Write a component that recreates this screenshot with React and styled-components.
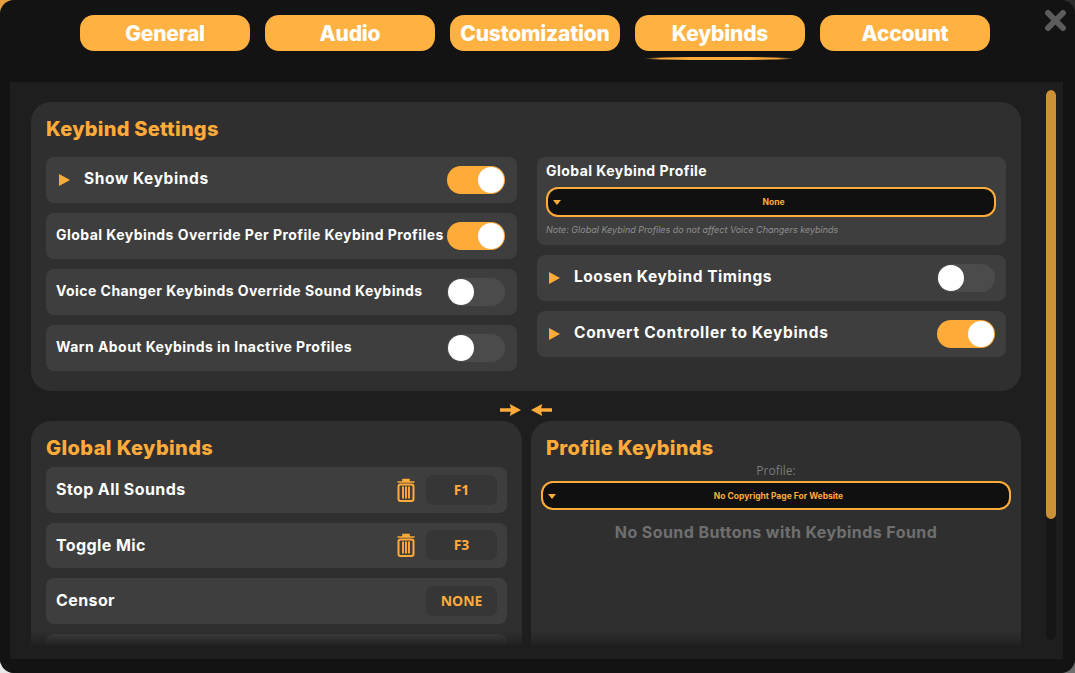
import React from "react";
import styled, { createGlobalStyle } from "styled-components";

const Global = createGlobalStyle`
  html, body { margin: 0; padding: 0; }
  html { background: #0c0c0c; }
  body {
    width: 1075px; height: 673px; overflow: hidden; font-family: "Inter", "Liberation Sans", sans-serif;
    background:
      radial-gradient(circle at 0 0, #e6a040 0 10px, transparent 16px),
      radial-gradient(circle at 100% 0, #2c2c2c 0 10px, transparent 16px),
      radial-gradient(circle at 0 100%, #e8e8e8 0 9px, transparent 14px),
      radial-gradient(circle at 100% 100%, #6e6e6e 0 10px, transparent 16px),
      #0c0c0c;
  }
  * { box-sizing: border-box; }
`;
const orange = "#ffab3a";

const Window = styled.div`
  width: 1075px; height: 673px; background: #131313; border-radius: 14px;
  position: relative; overflow: hidden; display: flex; flex-direction: column;
`;
const TabBar = styled.div`
  height: 82px; padding: 15px 0 0 80px; display: flex; gap: 15px; align-items: flex-start;
`;
const Tab = styled.div`
  width: 170px; height: 36px; border-radius: 14px; background: #ffb142; color: #fff;
  font-weight: 800; font-size: 21px; line-height: 37px; text-align: center; position: relative; letter-spacing: -.2px;
  ${p => p.$active && `
    &::after { content: ""; position: absolute; left: 8px; right: 10px; top: 42px; height: 3px;
      border-radius: 50%; background: linear-gradient(90deg, transparent, ${orange} 12%, ${orange} 88%, transparent); }
  `}
`;
const Close = styled.svg`
  position: absolute; left: 1044px; top: 9px; width: 23px; height: 23px;
`;
const Content = styled.div`
  margin: 0 12px 0 10px; height: 577px; background: #1e1e1e; position: relative;
  padding: 20px 42px 0 21px;
`;
const Scroll = styled.div`
  height: 543px; overflow: hidden; display: flex; flex-direction: column;
`;
const Card = styled.div`
  background: #2f2f2f; border-radius: 20px; padding: 15px;
`;
const SettingsCard = styled(Card)`height: 289px; flex: none;`;
const Title = styled.h2`
  margin: 0; color: ${orange}; font-size: 20px; font-weight: 800; line-height: 25px; letter-spacing: ${p => p.$ls || .3}px;
`;
const SettingsGrid = styled.div`
  display: grid; grid-template-columns: 471px 469px; gap: 20px; margin-top: 15px;
`;
const Column = styled.div`display: flex; flex-direction: column; gap: 10px;`;
const Row = styled.div`
  height: 46px; background: #3e3e3e; border-radius: 8px; display: flex; align-items: center;
  padding: 0 12px 0 10px; color: #fff; font-weight: 700; font-size: ${p => p.$fs || 15}px;
  letter-spacing: ${p => p.$ls || .45}px;
`;
const RightRow = styled(Row)`padding: 0 11px 0 9px;`;
const Tri = styled.span`
  width: 0; height: 0; border-left: 11px solid ${orange}; border-top: 6px solid transparent; border-bottom: 6px solid transparent;
  margin: 0 14px 0 3px; flex: none;
`;
const Label = styled.span`flex: 1; white-space: nowrap; padding-bottom: 3px;`;
const Toggle = styled.div`
  width: 58px; height: 28px; border-radius: 14px; flex: none; position: relative;
  background: ${p => p.$on ? "#ffab3a" : "#4b4b4b"};
  &::after { content: ""; position: absolute; top: 1px; ${p => p.$on ? "right: 1px" : "left: 1px"};
    width: 26px; height: 26px; border-radius: 50%; background: #fff; }
`;
const ProfileBox = styled.div`
  height: 88px; background: #3e3e3e; border-radius: 8px; padding: 5px 10px 0 9px; display: flex; flex-direction: column;
`;
const BoxLabel = styled.div`color: #fff; font-weight: 700; font-size: 14px; line-height: 18px; letter-spacing: .45px;`;
const Select = styled.div`
  height: 30px; margin-top: 7px; padding-left: 5px; background: #101010; border: 2px solid #ffab3a; border-radius: 12px; position: relative;
  display: flex; align-items: center; justify-content: center; color: ${orange}; font-weight: 700; font-size: 8.5px;
  &::before { content: ""; position: absolute; left: 5px; top: 50%; margin-top: -2px; border-top: 5px solid ${orange};
    border-left: 4px solid transparent; border-right: 4px solid transparent; }
`;
const WideSelect = styled(Select)`height: 29px; margin: 2px -5px 0;`;
const Note = styled.div`color: #8e8e8e; font-size: 9px; font-style: italic; margin-top: 7px; line-height: 12px;`;
const ArrowRow = styled.div`
  height: 30px; padding: 8px 1px 0 0; display: flex; justify-content: center; align-items: center; gap: 10px;
`;
const Bottom = styled.div`display: grid; grid-template-columns: 491px 490px; gap: 9px; flex: 1; min-height: 0;`;
const BottomCard = styled(Card)`
  border-radius: 20px 20px 0 0; padding-bottom: 0; display: flex; flex-direction: column; overflow: hidden; height: 100%;
`;
const KeyList = styled.div`display: flex; flex-direction: column; gap: 10px; margin-top: 6px;`;
const KeyRow = styled(Row)`
  height: 45.5px; padding: 0 10px; font-size: 16px; flex: none; letter-spacing: .4px;
  ${Label} { padding-bottom: 1px; }
`;
const Key = styled.div`
  width: 71px; height: 30px; border-radius: 7px; background: #363636; color: ${orange}; flex: none;
  font: 700 14px/30px "Open Sans", sans-serif; text-align: center; margin-left: 11px; letter-spacing: 0;
`;
const ProfileLabel = styled.div`color: #7a7a7a; text-align: center; font: 400 12px/16px "Open Sans", sans-serif; margin-top: 2px;`;
const Empty = styled.div`color: #6f6f6f; text-align: center; font-weight: 700; font-size: 16px; margin-top: 12px; letter-spacing: .42px;`;
const Fade = styled.div`
  position: absolute; left: 21px; right: 42px; top: 549px; height: 14px; pointer-events: none;
  background: linear-gradient(rgba(30,30,30,0), rgba(30,30,30,.85));
`;
const Track = styled.div`
  position: absolute; left: 1036px; top: 8px; width: 10px; height: 550px; background: #161616; border-radius: 5px; overflow: hidden;
`;
const Thumb = styled.div`height: 429px; background: #cc9136; border-radius: 5px;`;
const FlipWrap = styled.span`display: flex; ${p => p.$flip && "transform: scaleX(-1);"}`;

const Trash = () => (
  <svg width="18" height="24" viewBox="0 0 18 24" fill="none" stroke={orange} strokeWidth="2">
    <path d="M6 1.5h6v1.5H6zM0.5 4h17" strokeWidth="1.6" />
    <rect x="1.5" y="6.5" width="15" height="16.5" rx="2" />
    <path d="M6 8.5v12M9 8.5v12M12 8.5v12" strokeWidth="1.9" />
  </svg>
);
const Arrow = ({ flip }) => (
  <FlipWrap $flip={flip}>
    <svg width="21" height="14" viewBox="0 0 21 14">
      <path d="M0 5.2h10.800L9.800 1 21 7 9.800 13l1-4.200H0z" fill={orange} />
    </svg>
  </FlipWrap>
);

const SoloRow = ({ label, on, arrow, fs, ls, as: C = Row }) => (
  <C $fs={fs} $ls={ls}>
    {arrow && <Tri />}
    <Label>{label}</Label>
    <Toggle $on={on} />
  </C>
);

export default function App() {
  return (
    <Window>
      <Global />
      <TabBar>
        {["General", "Audio", "Customization", "Keybinds", "Account"].map(t => (
          <Tab key={t} $active={t === "Keybinds"}>{t}</Tab>
        ))}
      </TabBar>
      <Close viewBox="0 0 23 23"><path d="M4 4l15 15M19 4L4 19" stroke="#5c5c5c" strokeWidth="6" strokeLinecap="round" /></Close>
      <Content>
        <Scroll>
          <SettingsCard>
            <Title $ls={.25}>Keybind Settings</Title>
            <SettingsGrid>
              <Column>
                <SoloRow arrow fs={15.5} ls={.6} label="Show Keybinds" on />
                <SoloRow label="Global Keybinds Override Per Profile Keybind Profiles" on fs={14} />
                <SoloRow label="Voice Changer Keybinds Override Sound Keybinds" fs={14} />
                <SoloRow label="Warn About Keybinds in Inactive Profiles" fs={14} />
              </Column>
              <Column>
                <ProfileBox>
                  <BoxLabel>Global Keybind Profile</BoxLabel>
                  <Select>None</Select>
                  <Note>Note: Global Keybind Profiles do not affect Voice Changers keybinds</Note>
                </ProfileBox>
                <SoloRow as={RightRow} arrow fs={15.5} ls={.55} label="Loosen Keybind Timings" />
                <SoloRow as={RightRow} arrow fs={15.5} ls={.7} label="Convert Controller to Keybinds" on />
              </Column>
            </SettingsGrid>
          </SettingsCard>
          <ArrowRow><Arrow /><Arrow flip /></ArrowRow>
          <Bottom>
            <BottomCard>
              <Title $ls={.4}>Global Keybinds</Title>
              <KeyList>
                <KeyRow><Label>Stop All Sounds</Label><Trash /><Key>F1</Key></KeyRow>
                <KeyRow><Label>Toggle Mic</Label><Trash /><Key>F3</Key></KeyRow>
                <KeyRow><Label>Censor</Label><Key>NONE</Key></KeyRow>
                <KeyRow />
              </KeyList>
            </BottomCard>
            <BottomCard>
              <Title>Profile Keybinds</Title>
              <ProfileLabel>Profile:</ProfileLabel>
              <WideSelect>No Copyright Page For Website</WideSelect>
              <Empty>No Sound Buttons with Keybinds Found</Empty>
            </BottomCard>
          </Bottom>
        </Scroll>
        <Fade />
        <Track><Thumb /></Track>
      </Content>
    </Window>
  );
}
